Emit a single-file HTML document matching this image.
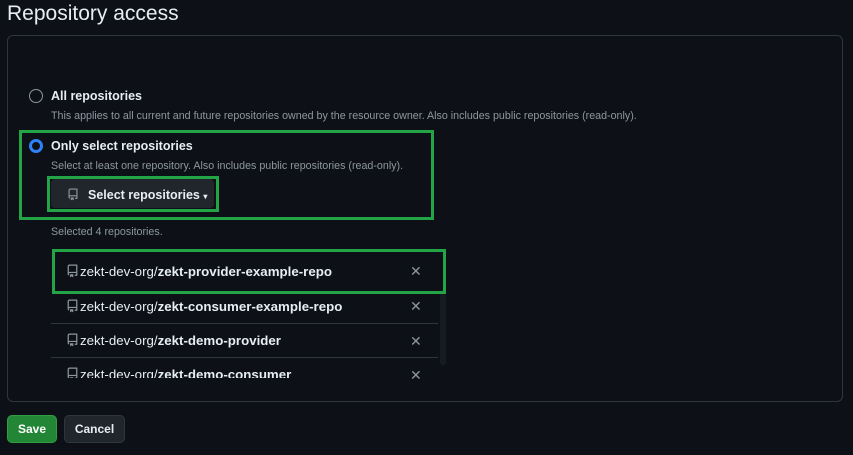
<!DOCTYPE html>
<html><head><style>
body{margin:0;width:853px;height:455px;background:#0d1117;font-family:"Liberation Sans",sans-serif;color:#e6edf3;position:relative;overflow:hidden}
.a{position:absolute}
.t{font-size:12.5px;color:#e6edf3}
.m{font-size:10.7px;color:#8d96a0}
.g{border:3px solid #22a447;box-sizing:border-box}
.repo{position:absolute;left:66px;font-size:13.3px;color:#e6edf3;white-space:nowrap}
.repo svg{vertical-align:-2px;margin-right:1px}
.x{position:absolute;left:410px;font-size:14px;color:#8d96a0}
.sep{position:absolute;left:51px;width:387px;height:1px;background:#30363d}
</style></head><body>
<svg width="0" height="0" style="position:absolute"><defs><symbol id="r" viewBox="0 0 16 16"><path d="M2 2.5A2.5 2.5 0 0 1 4.5 0h8.75a.75.75 0 0 1 .75.75v12.5a.75.75 0 0 1-.75.75h-2.5v-1.5h1.75v-2h-8a1 1 0 0 0-.71 1.71.75.75 0 0 1-1.06 1.06A2.49 2.49 0 0 1 2 11.5Zm10.5-1h-8a1 1 0 0 0-1 1v6.71A2.5 2.5 0 0 1 4.5 9h8ZM5 12.25a.25.25 0 0 1 .25-.25h3.5a.25.25 0 0 1 .25.25v3.25a.25.25 0 0 1-.4.2l-1.45-1.09a.25.25 0 0 0-.3 0L5.4 15.7a.25.25 0 0 1-.4-.2Z" fill="#8d96a0"/></symbol></defs></svg>
<div class="a" style="left:7px;top:0;font-size:21px;line-height:28px;color:#e6edf3">Repository access</div>
<div class="a" style="left:7px;top:35px;width:834px;height:365px;border:1px solid #30363d;border-radius:6px"></div>

<div class="a" style="left:29px;top:89px;width:12px;height:12px;border:1px solid #8d96a0;border-radius:50%"></div>
<div class="a t" style="left:51px;top:89px;font-weight:bold">All repositories</div>
<div class="a m" style="left:51px;top:110px">This applies to all current and future repositories owned by the resource owner. Also includes public repositories (read-only).</div>

<div class="a g" style="left:19px;top:130px;width:415px;height:90px"></div>
<div class="a" style="left:29px;top:139px;width:8px;height:8px;border:3px solid #2f81f7;border-radius:50%"></div>
<div class="a t" style="left:51px;top:139px;font-weight:bold">Only select repositories</div>
<div class="a m" style="left:51px;top:160px">Select at least one repository. Also includes public repositories (read-only).</div>
<div class="a" style="left:51px;top:179px;width:163px;height:29px;background:#21262d;border-radius:4px"></div>
<div class="a g" style="left:47px;top:176px;width:172px;height:36px"></div>
<svg class="a" style="left:67px;top:188px" width="12" height="13"><use href="#r"/></svg>
<div class="a t" style="left:88px;top:188px;font-weight:bold">Select repositories <span style="font-size:8px">▾</span></div>

<div class="a m" style="left:51px;top:226px">Selected 4 repositories.</div>

<div class="a" style="left:440px;top:290px;width:6px;height:75px;background:#161b22;border-radius:3px"></div>
<div class="a g" style="left:52px;top:249px;width:394px;height:45px"></div>
<div class="sep" style="top:323px"></div>
<div class="sep" style="top:357px"></div>
<div class="repo" style="top:264px"><svg width="13" height="14"><use href="#r"/></svg>zekt-dev-org/<b>zekt-provider-example-repo</b></div>
<div class="x" style="top:263px">✕</div>
<div class="repo" style="top:299px"><svg width="13" height="14"><use href="#r"/></svg>zekt-dev-org/<b>zekt-consumer-example-repo</b></div>
<div class="x" style="top:298px">✕</div>
<div class="repo" style="top:333px"><svg width="13" height="14"><use href="#r"/></svg>zekt-dev-org/<b>zekt-demo-provider</b></div>
<div class="x" style="top:333px">✕</div>
<div class="a" style="left:51px;top:366px;width:390px;height:12px;overflow:hidden"><div class="repo" style="left:15px;top:1px"><svg width="13" height="14"><use href="#r"/></svg>zekt-dev-org/<b>zekt-demo-consumer</b></div></div>
<div class="x" style="top:367px">✕</div>

<div class="a" style="left:7px;top:415px;width:50px;height:28px;background:#238636;border:1px solid #2ea043;box-sizing:border-box;border-radius:5px;font-size:12px;font-weight:bold;color:#fff;text-align:center;line-height:26px">Save</div>
<div class="a" style="left:64px;top:415px;width:61px;height:28px;background:#21262d;border:1px solid #30363d;box-sizing:border-box;border-radius:5px;font-size:12px;font-weight:bold;color:#e6edf3;text-align:center;line-height:26px">Cancel</div>
</body></html>
